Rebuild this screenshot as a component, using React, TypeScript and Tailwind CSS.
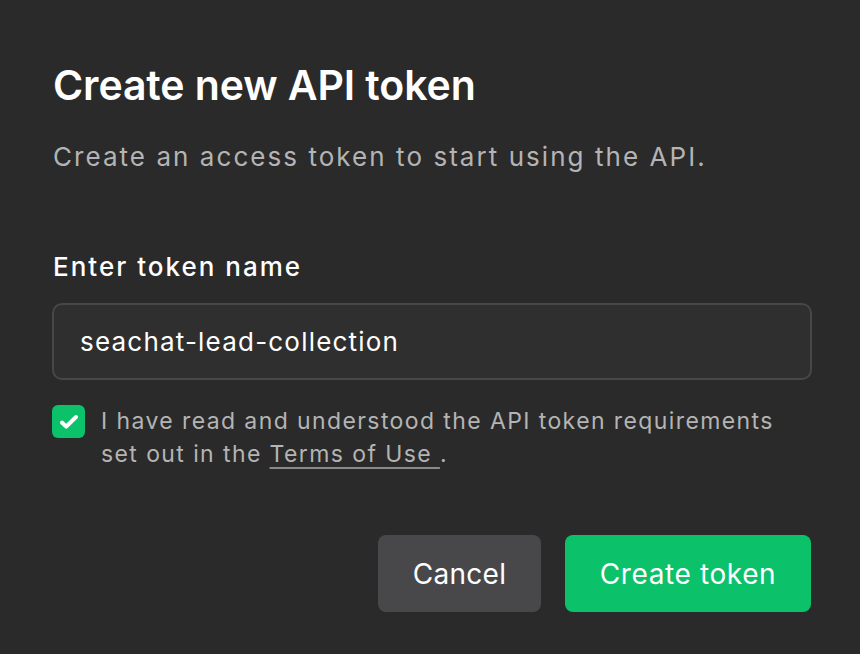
import React from "react";

export default function App() {
  return (
    <div
      className="w-[860px] h-[654px] bg-[#2a2a2a] px-[53px] pt-[58px] overflow-hidden"
      style={{ fontFamily: "Inter, 'Noto Sans', sans-serif" }}
    >
      <h1 className="text-[41px] leading-[54px] font-semibold text-white tracking-[-0.1px]">
        Create new API token
      </h1>
      <p className="mt-[25px] text-[26px] leading-[40px] text-[#b4b4b4] tracking-[2.05px]">
        Create an access token to start using the API.
      </p>
      <label className="block mt-[70px] text-[26px] leading-[40px] font-medium text-white tracking-[2px]">
        Enter token name
      </label>
      <div className="mt-[16px] w-[760px] h-[77px] -ml-px rounded-[10px] border-2 border-[#474747] bg-[#2f2f2f] flex items-center px-[26px]">
        <span className="text-[26px] text-white tracking-[1.2px]">seachat-lead-collection</span>
      </div>
      <div className="mt-[25px] flex gap-[16px] -ml-px">
        <div className="w-[33px] h-[33px] shrink-0 rounded-[6px] bg-[#0bc16a] flex items-center justify-center">
          <svg width="24" height="24" viewBox="0 0 24 24" fill="none">
            <path d="M5 12.5l4.2 4.2L19 7" stroke="white" strokeWidth="4" strokeLinecap="round" strokeLinejoin="round" />
          </svg>
        </div>
        <p className="text-[23px] leading-[33px] text-[#b4b4b4] tracking-[1.4px]">
          I have read and understood the API token requirements
          <br />
          set out in the{" "}
          <span className="underline underline-offset-[5px] decoration-[#8a8a8a]">Terms of Use </span>.
        </p>
      </div>
      <div className="mt-[64px] flex justify-end gap-[24px] w-[758px]">
        <button className="w-[163px] h-[77px] rounded-[8px] bg-[#48484a] text-white text-[28px] tracking-[0.3px]">
          Cancel
        </button>
        <button className="w-[246px] h-[77px] rounded-[8px] bg-[#0bc16a] text-white text-[28px] tracking-[0.6px]">
          Create token
        </button>
      </div>
    </div>
  );
}
